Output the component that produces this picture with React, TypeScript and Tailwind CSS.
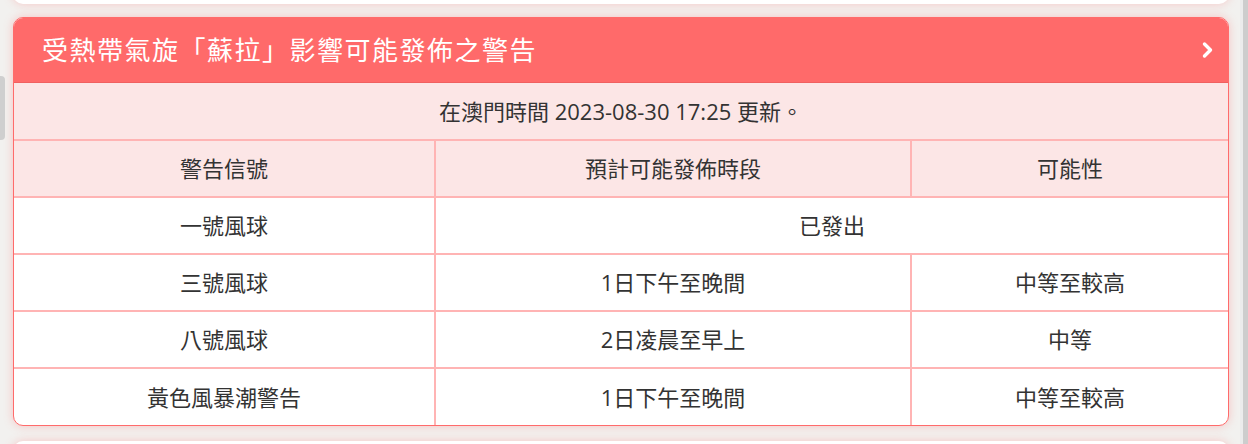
import React from "react";

const rows = [
  { signal: "一號風球", time: "已發出", chance: null as string | null },
  { signal: "三號風球", time: "1日下午至晚間", chance: "中等至較高" },
  { signal: "八號風球", time: "2日凌晨至早上", chance: "中等" },
  { signal: "黃色風暴潮警告", time: "1日下午至晚間", chance: "中等至較高" },
];

function ChevronRight() {
  return (
    <svg viewBox="0 0 13 18" className="w-[13px] h-[18px]" aria-hidden>
      <path d="M3.5 3 L9.5 9 L3.5 15" stroke="white" strokeWidth="3.4" fill="none" strokeLinecap="round" strokeLinejoin="round" />
    </svg>
  );
}

export default function App() {
  const cell = "border-2 border-[#ffb4b4] h-[57px] p-0 text-center align-middle font-normal";

  return (
    <div
      className="relative flex h-[444px] w-[1248px] overflow-hidden bg-[#f2f1ef] text-[#333]"
      style={{ fontFamily: '"Open Sans", "Noto Sans CJK TC", sans-serif' }}
    >
      {/* carousel edge on the left */}
      <div className="absolute left-0 top-[76px] h-[64px] w-[5px] rounded-r bg-[#cfcfcf]" />

      <main className="flex flex-1 flex-col gap-[13px] pl-[13px] pr-[11px]">
        {/* card above, only its bottom shows */}
        <div className="mt-[-10px] h-[14px] shrink-0 rounded-b-[10px] bg-white shadow-[0_0_10px_rgba(255,120,120,0.35)]" />

        <section className="shrink-0 overflow-hidden rounded-[10px] border border-[#ff6b6b] bg-white shadow-[0_0_10px_rgba(255,110,110,0.35)]">
          <header className="flex h-[65px] items-center justify-between border-b border-[#f06060] bg-[#ff6a6a] pl-[28px] pr-[14px] text-white">
            <h1 className="text-[26px] font-normal tracking-[1.5px]">受熱帶氣旋「蘇拉」影響可能發佈之警告</h1>
            <ChevronRight />
          </header>

          <table className="w-full table-fixed border-collapse border-hidden text-[22px]">
            <colgroup>
              <col className="w-[421px]" />
              <col className="w-[476px]" />
              <col />
            </colgroup>
            <tbody>
              <tr className="bg-[#fce6e6]">
                <td colSpan={3} className={cell}>在澳門時間 2023-08-30 17:25 更新。</td>
              </tr>
              <tr className="bg-[#fce6e6]">
                <th className={cell}>警告信號</th>
                <th className={cell}>預計可能發佈時段</th>
                <th className={cell}>可能性</th>
              </tr>
              {rows.map((r) => (
                <tr key={r.signal}>
                  <td className={cell}>{r.signal}</td>
                  {r.chance === null ? (
                    <td colSpan={2} className={cell}>{r.time}</td>
                  ) : (
                    <>
                      <td className={cell}>{r.time}</td>
                      <td className={cell}>{r.chance}</td>
                    </>
                  )}
                </tr>
              ))}
            </tbody>
          </table>
        </section>

        {/* next card, only its top shows */}
        <div className="mt-[2px] h-[20px] shrink-0 rounded-t-[10px] bg-white shadow-[0_0_10px_rgba(255,120,120,0.35)]" />
      </main>

      {/* scrollbar strip */}
      <div className="flex w-[8px] shrink-0">
        <div className="w-[3px] bg-[#ececec]" />
        <div className="w-[5px] bg-[#cdcdcd]" />
      </div>
    </div>
  );
}
